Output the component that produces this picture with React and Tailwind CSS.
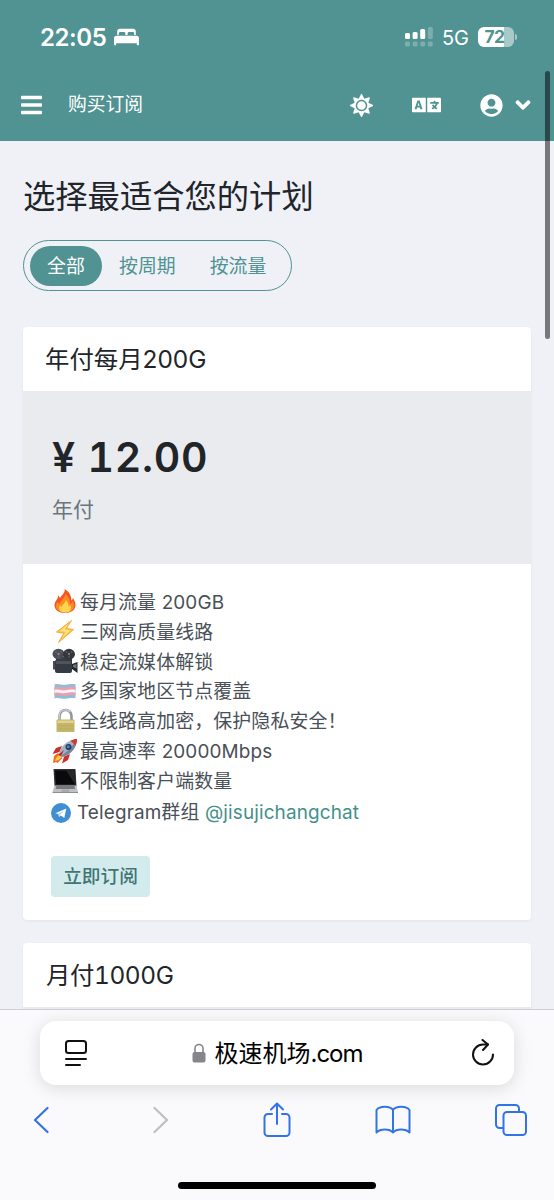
import { FaBars, FaSun, FaLanguage, FaUserCircle, FaAngleDown } from 'react-icons/fa';

const FireIcon = () => (
    <svg viewBox="0 0 26 26" className="w-[26px] h-[26px]">
        <path d="M12.500 1c1 3-2 5.500-4.500 9C7.500 9 7 8 6 7.500 6.500 11 2.500 13 2.500 17.500 2.500 22 7 25 13 25s10.500-3 10.500-8c0-3-1.500-5-2.500-7-.5 1.500-1 2-2 2.500C20 8 16.500 3 12.500 1z" fill="#f4571f" />
        <path d="M13 6c.5 4-4.500 6-5.500 10-1-.5-1.500-1.500-1.500-2.500C4.500 15 4 16.500 4 18c0 4 4 6.500 9 6.500s9-2.500 9-6.500c0-2-.5-3.500-1.500-5-.5 1.500-1.500 2.500-2.500 3C18.500 12 16 8 13 6z" fill="#fb8c25" />
        <path d="M13.500 12c.5 2.500-3 4-4 7-.5-.5-1-1-1-2-1 1-1.500 2-1.500 3 0 3 3 4.500 6.500 4.500S19 23 19 20c0-1-.5-2-1-3-.5 1-1 1.500-1.500 1.500.5-2.500-1-5-3-6.500z" fill="#fed44f" />
    </svg>
);

const BoltIcon = () => (
    <svg viewBox="0 0 26 26" className="w-[26px] h-[26px]">
        <path d="M19.500 2.500 4.500 14l7.500 1.200L6.500 24.500 21.500 11.500l-7.200-1z" fill="#fdc843" stroke="#f3a83a" strokeWidth="1" strokeLinejoin="round" />
        <path d="M16 6 8 13l6 .7-3.500 5.800 7.500-7-5.500-.8z" fill="#ffe58e" />
    </svg>
);

const CameraIcon = () => (
    <svg viewBox="0 0 26 26" className="w-[26px] h-[26px]">
        <path d="M1 13h2l2 1v8l-2-.5H1z" fill="#494e55" />
        <path d="m20 16 5.500-2v11L20 21z" fill="#22252b" />
        <path d="M4 9h16v5H4z" fill="#3b3f46" />
        <rect x="3" y="11.500" width="17" height="13.500" rx="2" fill="#363a43" />
        <path d="M4 13h15v3H4z" fill="#50545c" />
        <ellipse cx="6.500" cy="6" rx="6" ry="5.200" fill="#4a4d53" />
        <ellipse cx="17" cy="6.200" rx="6" ry="5.400" fill="#33373d" />
        <circle cx="6.500" cy="6" r="1.200" fill="#85888d" />
        <circle cx="17" cy="6" r="1.200" fill="#75787d" />
        <g fill="#696c71">
            <circle cx="4" cy="4" r=".8" />
            <circle cx="9" cy="4" r=".8" />
            <circle cx="6.500" cy="9" r=".8" />
            <circle cx="14.500" cy="4" r=".8" />
            <circle cx="19.500" cy="4" r=".8" />
            <circle cx="17" cy="9" r=".8" />
        </g>
        <path d="m21 17 3.500-1v4.500L21 19z" fill="#707680" />
    </svg>
);

const FlagIcon = () => (
    <svg viewBox="0 0 26 26" className="w-[26px] h-[26px]">
        <path d="M2.500 6.500c4-1.500 7 .8 11 .2s6-1.200 10-.4v14c-4-.8-6-.2-10 .4s-7-1.700-11-.2z" fill="#8ebcdb" />
        <path d="M2.500 9.300c4-1.500 7 .8 11 .2s6-1.200 10-.4v8.400c-4-.8-6-.2-10 .4s-7-1.700-11-.2z" fill="#eb9fae" />
        <path d="M2.500 12.100c4-1.500 7 .8 11 .2s6-1.200 10-.4v2.800c-4-.8-6-.2-10 .4s-7-1.700-11-.2z" fill="#f7f3f5" />
    </svg>
);

const PadlockIcon = () => (
    <svg viewBox="0 0 26 26" className="w-[26px] h-[26px]">
        <path d="M7.500 13V8a6 6 0 0 1 12 0v5" fill="none" stroke="#8f979c" strokeWidth="2.600" />
        <path d="M7.200 12V8a6.300 6.300 0 0 1 11-4" fill="none" stroke="#c8ced1" strokeWidth="1.200" />
        <rect x="4.500" y="11.500" width="18" height="12.500" rx="1" fill="#c5b568" />
        <path d="M5.500 12.500h16V15h-16z" fill="#e0d290" />
        <path d="M5.500 18h16M5.500 21h16" stroke="#b5a75b" strokeWidth=".7" />
    </svg>
);

const RocketIcon = () => (
    <svg viewBox="0 0 26 26" className="w-[26px] h-[26px]">
        <path d="M10 8 4 10 .5 16l7-2zM18 16l-2 6-6 3.500 2-7z" fill="#c92f2c" />
        <path d="m6 15-4 3-1 7 3-1 1.500 1 5-5z" fill="#f36a24" />
        <path d="m7 17-3 3-1 3 4-1 2.500-3z" fill="#ffcb48" />
        <path d="M7 16C8 9 15 2 25 1c-.5 10-7 16-15 18z" fill="#a6b1bf" />
        <path d="M9 18C16 13 21 8 25 1c-.5 10-7 16-15 18z" fill="#75869a" />
        <path d="M18.500 2.700C21 1.600 23 1 25 1c0 2-.6 4.500-1.500 6.500z" fill="#d73531" />
        <circle cx="16.500" cy="9" r="3" fill="#213a66" />
        <circle cx="16.200" cy="8.800" r="1.500" fill="#4d85be" />
        <path d="m6 17 6-5-3 6z" fill="#b32827" />
    </svg>
);

const LaptopIcon = () => (
    <svg viewBox="0 0 26 26" className="w-[26px] h-[26px]">
        <path d="M1.500 1h22l1 17H2.500z" fill="#303033" />
        <path d="M3 2.500h19.500l.8 14H4z" fill="#0a0a0c" />
        <path d="M14 2.500h8.500l.8 14z" fill="#27272a" />
        <path d="M2.500 17.500h22L26 24H.5z" fill="#bfc0c2" />
        <path d="M4.500 18h18l.5 3H3.500z" fill="#77787b" />
        <path d="M10 21.500h7l.5 2.500h-8z" fill="#a7a8aa" />
        <path d="M.5 24H26v1H.5z" fill="#8d8e90" />
    </svg>
);

const TelegramIcon = () => (
    <svg viewBox="0 0 20 20" className="w-5 h-5">
        <circle cx="10" cy="10" r="10" fill="#3f8fd2" />
        <path d="m4.300 10.200 11-4.700-2 9.500-3.600-2.600-1.700 1.700-.6-3.100z" fill="#fff" />
        <path d="m7.500 11 5.500-3.500-4.200 4.400-.7 2.200z" fill="#a9cfec" />
    </svg>
);

const BedIcon = () => (
    <svg viewBox="0 0 25 18" className="w-[25px] h-[18px]" fill="#fff">
        <path d="M3.200 7V3.400C3.200 1.600 4.200.8 6 .8h13c1.800 0 2.800.8 2.800 2.600V7h-1.600V5.700c0-1-.6-1.600-1.600-1.600h-3.400c-1 0-1.600.6-1.600 1.600V7h-2.200V5.700c0-1-.6-1.600-1.600-1.600H6.400c-1 0-1.600.6-1.600 1.600V7z" />
        <path d="M0 10.300C0 8.700.9 7.800 2.500 7.800h20c1.600 0 2.500.9 2.500 2.500v6c0 1.500-2.200 1.500-2.200 0v-1H2.200v1c0 1.500-2.200 1.500-2.200 0z" />
    </svg>
);

const SignalIcon = () => (
    <svg viewBox="0 0 28 20" className="w-7 h-5" fill="#fff">
        <rect x="0" y="6" width="5" height="6" rx="1.500" />
        <rect x="7.600" y="5" width="5" height="7" rx="1.500" />
        <rect x="15.200" y="2" width="5" height="10" rx="1.500" />
        <g opacity=".25">
            <rect x="22.800" y="0" width="5" height="12" rx="1.500" />
            <rect x="0" y="14.600" width="5" height="5" rx="1.500" />
            <rect x="7.600" y="14.600" width="5" height="5" rx="1.500" />
            <rect x="15.200" y="14.600" width="5" height="5" rx="1.500" />
            <rect x="22.800" y="14.600" width="5" height="5" rx="1.500" />
        </g>
    </svg>
);

const features = [
    { icon: <FireIcon />, text: '每月流量 200GB' },
    { icon: <BoltIcon />, text: '三网高质量线路' },
    { icon: <CameraIcon />, text: '稳定流媒体解锁' },
    { icon: <FlagIcon />, text: '多国家地区节点覆盖' },
    { icon: <PadlockIcon />, text: '全线路高加密，保护隐私安全！' },
    { icon: <RocketIcon />, text: '最高速率 20000Mbps' },
    { icon: <LaptopIcon />, text: '不限制客户端数量' },
];

function Header() {
    return (
        <header className="h-[141px] shrink-0 bg-[#509392] text-white">
            <div className="h-[74px] flex items-center pl-10 pr-[39px]">
                <span className="pt-0.5 text-[24px] font-semibold tracking-[-0.400px]">22:05</span>
                <span className="ml-[7px]">
                    <BedIcon />
                </span>
                <div className="ml-auto flex items-center">
                    <SignalIcon />
                    <span className="ml-[9px] pt-px text-[20px]">5G</span>
                    <div className="ml-[9px] w-[36px] h-5 rounded-[6px] bg-[linear-gradient(to_right,#fff_72%,#a7c9c8_72%)] text-[#509392] text-[17.500px] leading-5 font-bold text-center pr-[3px] tracking-[-0.500px]">
                        72
                    </div>
                    <div className="ml-px w-[2px] h-[6px] rounded-r bg-[#a7c9c8] -mr-[2px]"></div>
                </div>
            </div>
            <div className="h-[62px] flex items-center pl-[21px] pr-[22px]">
                <FaBars className="w-[21px] h-[24px]" preserveAspectRatio="none" />
                <span className="ml-[26px] text-[18.800px]">购买订阅</span>
                <FaSun className="ml-auto w-[23px] h-[23px]" />
                <FaLanguage className="ml-[39px] w-[29px] h-[24px]" />
                <FaUserCircle className="ml-[39px] w-[23px] h-[23px]" />
                <FaAngleDown className="ml-[11px] w-[18px] h-[24px]" />
            </div>
        </header>
    );
}

function BrowserBar() {
    return (
        <footer className="h-[191px] shrink-0 overflow-hidden border-t border-[#cfcfd3] bg-[#fafafc] flex flex-col items-center relative">
            <div className="mt-[11px] w-[474px] h-16 shrink-0 rounded-2xl bg-white shadow-[0_3px_18px_rgba(0,0,0,0.13)] flex items-center pl-[25px] pr-[19px]">
                <svg viewBox="0 0 22 26" className="w-[22px] h-[26px]" fill="none" stroke="#111" strokeWidth="2" strokeLinecap="round">
                    <rect x="1" y="1" width="20" height="12" rx="2.500" />
                    <path d="M1 19h20M1 25h14" />
                </svg>
                <div className="flex-1 flex items-center justify-center pr-[3px]">
                    <svg viewBox="0 0 14 20" className="w-[14px] h-5">
                        <path d="M3 10V5.500a4 4 0 0 1 8 0V10" fill="none" stroke="#85858a" strokeWidth="1.600" />
                        <rect x=".5" y="9" width="13" height="10.500" rx="2" fill="#85858a" />
                    </svg>
                    <span className="ml-2 pt-0.5 text-[24px] text-black">
                        极速机场<span className="tracking-[-1px]">.com</span>
                    </span>
                </div>
                <svg viewBox="0 0 24 28" className="w-6 h-7" fill="none" stroke="#111" strokeWidth="2" strokeLinecap="round" strokeLinejoin="round">
                    <path d="M22 15.500A10 10 0 1 1 12 5.500h5" />
                    <path d="m11.500 1 5.500 4.500-5 5.500" />
                </svg>
            </div>
            <div className="w-full mt-[15px] h-10 shrink-0 flex items-center justify-between pl-[33px] pr-[27px] text-[#3274e8]">
                <svg viewBox="0 0 16 28" className="w-4 h-7" fill="none" stroke="currentColor" strokeWidth="2.200" strokeLinecap="round" strokeLinejoin="round">
                    <path d="M14.500 2 2 14l12.500 12" />
                </svg>
                <svg viewBox="0 0 16 28" className="w-4 h-7 ml-[22px]" fill="none" stroke="#bfbfc3" strokeWidth="2.200" strokeLinecap="round" strokeLinejoin="round">
                    <path d="M1.500 2 14 14 1.500 26" />
                </svg>
                <svg viewBox="0 0 28 36" className="w-7 h-9 ml-[13px]" fill="none" stroke="currentColor" strokeWidth="2" strokeLinecap="round" strokeLinejoin="round">
                    <path d="M9 12H5a3.500 3.500 0 0 0-3.500 3.500v15A3.500 3.500 0 0 0 5 34h18a3.500 3.500 0 0 0 3.500-3.500v-15A3.500 3.500 0 0 0 23 12h-4M14 22V2M8 7.500 14 1.500l6 6" />
                </svg>
                <svg viewBox="0 0 36 30" className="w-9 h-[30px] ml-[2px] mr-[3px]" fill="none" stroke="currentColor" strokeWidth="2" strokeLinejoin="round">
                    <path d="M18 5C15 1 5 .5 1.500 5v22.500c4-4 13-4 16.500 0 3.500-4 12.500-4 16.500 0V5C31 .5 21 1 18 5zM18 5v22.500" />
                </svg>
                <svg viewBox="0 0 32 32" className="w-8 h-8" fill="none" stroke="currentColor" strokeWidth="2">
                    <path d="M8 24H4.500A3.500 3.500 0 0 1 1 20.500v-16A3.500 3.500 0 0 1 4.500 1h16A3.500 3.500 0 0 1 24 4.500V8" />
                    <rect x="8.500" y="8" width="22.500" height="23" rx="3.500" />
                </svg>
            </div>
            <div className="mt-[42px] w-[198px] h-[7px] shrink-0 rounded-full bg-black"></div>
        </footer>
    );
}

export default function App() {
    return (
        <div className="relative w-[554px] h-[1200px] overflow-hidden flex flex-col bg-[#eff1f7] text-[#212529] font-['Inter','Noto_Sans_CJK_SC',sans-serif]">
            <Header />
            <main className="flex-1 min-h-0 overflow-hidden px-[23px]">
                <h1 className="mt-[32px] h-12 leading-[48px] text-[32.300px] whitespace-nowrap">选择最适合您的计划</h1>
                <div className="mt-[19px] w-[269px] h-[51px] rounded-full border-[1.500px] border-[#509392] flex items-center pl-1.5 text-[18.900px] text-[#509392]">
                    <span className="w-[72px] h-10 pt-px leading-10 rounded-full bg-[#509392] text-white text-center">全部</span>
                    <span className="ml-[17px] pt-1">按周期</span>
                    <span className="ml-[34px] pt-1">按流量</span>
                </div>

                <section className="mt-[36px] bg-white rounded shadow-[0_1px_3px_rgba(0,0,0,0.06)]">
                    <h2 className="h-16 leading-[64px] pl-[22px] text-[24.400px]">年付每月200G</h2>
                    <div className="h-[173px] bg-[#e9ebee] pl-[29px] pt-[38px]">
                        <p className="h-14 leading-[56px] text-[41px] font-semibold tabular-nums tracking-[0.700px]">¥ 12.00</p>
                        <p className="mt-[9px] h-8 leading-8 text-[21px] text-[#6c757d]">年付</p>
                    </div>
                    <div className="h-[356px] pl-7 pt-[24px]">
                        <ul className="text-[18.900px] text-[#495057] tracking-[0.150px]">
                            {features.map((item) => (
                                <li key={item.text} className="h-[29.900px] flex items-center whitespace-nowrap">
                                    <span className="ml-px mb-[3px]">{item.icon}</span>
                                    <span className="ml-[2px]">{item.text}</span>
                                </li>
                            ))}
                            <li className="h-[31px] flex items-center whitespace-nowrap">
                                <TelegramIcon />
                                <span className="ml-1.5">
                                    Telegram群组 <a className="text-[#44908b]">@jisujichangchat</a>
                                </span>
                            </li>
                        </ul>
                        <button className="mt-[28px] w-[99px] h-[41px] rounded bg-[#d3ebec] text-[#3e7675] text-[18.700px] font-medium">立即订阅</button>
                    </div>
                </section>

                <section className="mt-[23px] bg-white rounded-t shadow-[0_1px_3px_rgba(0,0,0,0.06)]">
                    <h2 className="h-16 leading-[64px] pl-[23px] text-[24.400px] tabular-nums tracking-[-0.400px]">月付1000G</h2>
                    <div className="h-4 bg-[#e9ebee]"></div>
                </section>
            </main>
            <BrowserBar />
            <div className="absolute right-[4px] top-[71px] w-[5px] h-[268px] rounded-full bg-black/50"></div>
        </div>
    );
}
